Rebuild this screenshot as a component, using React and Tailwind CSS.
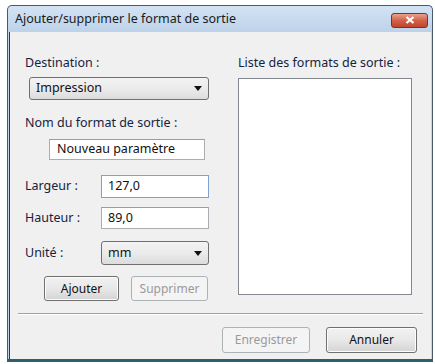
import React from "react";

const font = { fontFamily: '"Noto Sans", "Open Sans", sans-serif' };

function Combo({ value, className }) {
  return (
    <div
      className={`flex items-center justify-between rounded-[3px] border border-[#707070] bg-gradient-to-b from-[#f3f3f3] via-[#ebebeb] to-[#dcdcdc] pl-[6px] pr-[6px] text-[12.5px] text-[#111] ${className}`}
    >
      <span>{value}</span>
      <svg width="8" height="5" viewBox="0 0 8 5">
        <path d="M0 0 L8 0 L4 5 Z" fill="#111" />
      </svg>
    </div>
  );
}

function Btn({ children, disabled, className }) {
  return (
    <div
      className={`flex items-center justify-center rounded-[3px] border text-[12px] ${
        disabled
          ? "border-[#adb2b5] bg-[#f4f4f4] text-[#9a9a9a]"
          : "border-[#707070] bg-gradient-to-b from-[#f2f2f2] via-[#e8e8e8] to-[#d4d4d4] text-[#111] shadow-[inset_0_0_0_1px_#fcfcfc]"
      } ${className}`}
    >
      {children}
    </div>
  );
}

export default function App() {
  return (
    <div className="h-[364px] w-[435px] overflow-hidden bg-white pl-[7px] pt-[5px]" style={font}>
      <div className="flex h-[357px] w-[426px] flex-col rounded-t-[5px] border border-[#4a5a6a] border-b-[3px] border-b-[#2f5e6e] bg-[#c3d7ec]">
        {/* title bar */}
        <div className="flex h-[26px] shrink-0 items-center justify-between rounded-t-[5px] bg-gradient-to-b from-[#d3e3f4] to-[#bdd2e9] pl-[7px] pr-[4px]">
          <span className="text-[12.5px] text-[#1a1a1a]">Ajouter/supprimer le format de sortie</span>
          <div className="mt-[2px] flex h-[15px] w-[37px] items-center justify-center rounded-[3px] border border-[#7a3424] bg-gradient-to-b from-[#e9a28c] via-[#d2614a] to-[#c0452c]">
            <svg width="10" height="8" viewBox="0 0 10 8">
              <path d="M1.5 1 L8.5 7 M8.5 1 L1.5 7" stroke="#fff" strokeWidth="2.2" />
            </svg>
          </div>
        </div>
        {/* client */}
        <div className="ml-[1px] mr-[1px] flex flex-1 flex-col border-l border-[#3a3a3a] bg-[#f0f0f0]">
          <div className="flex pl-[15px] pt-[24px]">
            {/* left column */}
            <div className="flex w-[184px] flex-col text-[12.5px] text-[#15233f]">
              <div className="h-[14px] leading-[14px]">Destination :</div>
              <Combo value="Impression" className="ml-[4px] mt-[7px] h-[23px] w-[180px]" />
              <div className="mt-[16px] h-[14px] leading-[14px]">Nom du format de sortie :</div>
              <div className="ml-[24px] mt-[9px] flex h-[21px] w-[156px] items-center border border-[#abadb3] border-t-[#9a9ca3] bg-white pl-[7px] text-[#111]">
                Nouveau paramètre
              </div>
              <div className="mt-[15px] flex h-[23px] items-center">
                <span className="w-[76px]">Largeur :</span>
                <div className="flex h-[23px] w-[108px] items-center border border-[#7da2ce] bg-white pl-[6px] text-[#111]">
                  127,0
                </div>
              </div>
              <div className="mt-[9px] flex h-[22px] items-center">
                <span className="w-[76px]">Hauteur :</span>
                <div className="flex h-[22px] w-[108px] items-center border border-[#abadb3] border-t-[#9a9ca3] bg-white pl-[6px] text-[#111]">
                  89,0
                </div>
              </div>
              <div className="mt-[12px] flex h-[24px] items-center">
                <span className="w-[76px]">Unité :</span>
                <Combo value="mm" className="h-[24px] w-[108px]" />
              </div>
              <div className="ml-[19px] mt-[11px] flex h-[25px] gap-[12px]">
                <Btn className="h-[25px] w-[75px]">Ajouter</Btn>
                <Btn disabled className="h-[25px] w-[77px]">Supprimer</Btn>
              </div>
            </div>
            {/* right column */}
            <div className="ml-[29px] flex w-[174px] flex-col text-[12.5px] text-[#15233f]">
              <div className="h-[14px] leading-[14px]">Liste des formats de sortie :</div>
              <div className="mt-[8px] h-[217px] border border-[#828790] bg-white" />
            </div>
          </div>
          <div className="ml-[8px] mr-[8px] mt-[12px] h-[2px] border-t border-[#a0a0a0] border-b border-b-white" />
          <div className="mt-[12px] flex justify-end gap-[16px] pr-[14px]">
            <Btn disabled className="h-[26px] w-[88px]">Enregistrer</Btn>
            <Btn className="h-[26px] w-[91px]">Annuler</Btn>
          </div>
        </div>
      </div>
    </div>
  );
}
